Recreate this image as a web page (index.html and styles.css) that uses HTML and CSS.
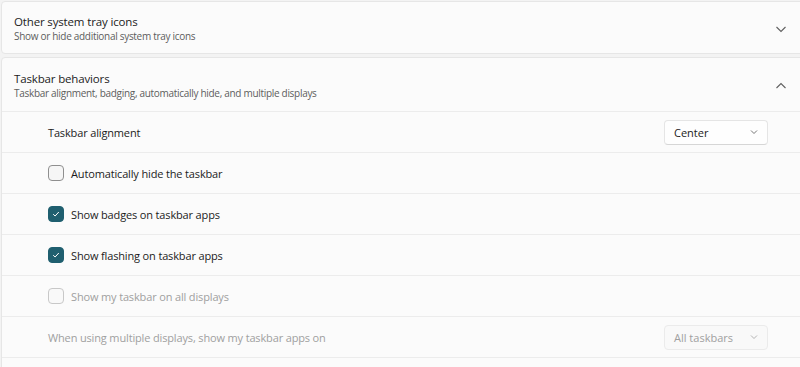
FILE: index.html
```html
<!DOCTYPE html>
<html lang="en">
<head>
  <meta charset="UTF-8" />
  <meta name="viewport" content="width=device-width, initial-scale=1.0"/>
  <title>Taskbar settings</title>
  <link rel="stylesheet" href="styles.css">
</head>
<body>

<div class="page">
  <!-- Tarjeta plegada -->
  <div class="card">
    <div class="card-head">
      <div>
        <div class="title">Other system tray icons</div>
        <div class="subtitle">Show or hide additional system tray icons</div>
      </div>
      <svg class="chevron" width="12" height="12" viewBox="0 0 12 12"><path d="M1.5 4 L6 8.5 L10.5 4" fill="none" stroke="#5f5f5f" stroke-width="1.1"/></svg>
    </div>
  </div>

  <!-- Tarjeta abierta -->
  <div class="card">
    <div class="card-head head-open">
      <div>
        <div class="title">Taskbar behaviors</div>
        <div class="subtitle">Taskbar alignment, badging, automatically hide, and multiple displays</div>
      </div>
      <svg class="chevron" width="12" height="12" viewBox="0 0 12 12"><path d="M1.5 8 L6 3.5 L10.5 8" fill="none" stroke="#5f5f5f" stroke-width="1.1"/></svg>
    </div>

    <div class="row">
      <span class="label">Taskbar alignment</span>
      <div class="dropdown">
        <span>Center</span>
        <svg width="8" height="8" viewBox="0 0 8 8"><path d="M1 2.5 L4 5.5 L7 2.5" fill="none" stroke="#666" stroke-width="0.9"/></svg>
      </div>
    </div>

    <div class="row">
      <label class="check"><span class="box"></span>Automatically hide the taskbar</label>
    </div>

    <div class="row">
      <label class="check"><span class="box on"><svg width="10" height="10" viewBox="0 0 10 10"><path d="M2.2 5.2 L4.1 7 L7.8 3" fill="none" stroke="#fff" stroke-width="1"/></svg></span>Show badges on taskbar apps</label>
    </div>

    <div class="row">
      <label class="check"><span class="box on"><svg width="10" height="10" viewBox="0 0 10 10"><path d="M2.2 5.2 L4.1 7 L7.8 3" fill="none" stroke="#fff" stroke-width="1"/></svg></span>Show flashing on taskbar apps</label>
    </div>

    <div class="row disabled">
      <label class="check"><span class="box"></span>Show my taskbar on all displays</label>
    </div>

    <div class="row disabled">
      <span class="label">When using multiple displays, show my taskbar apps on</span>
      <div class="dropdown">
        <span>All taskbars</span>
        <svg width="8" height="8" viewBox="0 0 8 8"><path d="M1 2.5 L4 5.5 L7 2.5" fill="none" stroke="#aaa" stroke-width="0.9"/></svg>
      </div>
    </div>

    <div class="row"></div>
  </div>
</div>

</body>
</html>
```

FILE: styles.css
```css
body {
  margin: 0;
  font-family: 'Segoe UI', 'Open Sans', sans-serif;
  background: #f3f3f3;
  color: #1b1b1b;
  overflow: hidden;
}

.page {
  width: 812px;
  margin: 1px 0 0 1px;
  display: flex;
  flex-direction: column;
  gap: 3px;
}

.card {
  background: #fbfbfb;
  border: 1px solid #e6e6e6;
  border-radius: 4px;
}

.card-head {
  height: 49px;
  padding: 2px 19px 0 12px;
  display: flex;
  align-items: center;
  justify-content: space-between;
}

.head-open {
  height: 51px;
}

.title {
  font-size: 11.5px;
  letter-spacing: -0.15px;
  line-height: 16px;
}

.subtitle {
  font-size: 10px;
  letter-spacing: -0.3px;
  line-height: 13px;
  color: #5d5d5d;
}

.chevron {
  margin-right: 6px;
}

.row {
  height: 40px;
  border-top: 1px solid #ececec;
  display: flex;
  align-items: center;
  justify-content: space-between;
  padding: 0 44px 0 46px;
  font-size: 11px;
  letter-spacing: -0.15px;
}

.check {
  display: flex;
  align-items: center;
  gap: 7px;
}

.box {
  width: 14px;
  height: 14px;
  border: 1px solid #8f8f8f;
  border-radius: 4px;
  background: #f6f6f6;
  display: flex;
  align-items: center;
  justify-content: center;
}

.box.on {
  background: #1f5f6f;
  border-color: #1f5f6f;
}

.dropdown {
  width: 84px;
  height: 23px;
  padding: 0 9px;
  border: 1px solid #e5e5e5;
  border-bottom-color: #d6d6d6;
  border-radius: 4px;
  background: #fefefe;
  display: flex;
  align-items: center;
  justify-content: space-between;
  letter-spacing: 0;
}

.disabled {
  color: #a0a0a0;
}

.disabled .box {
  border-color: #c8c8c8;
  background: #f9f9f9;
}

.disabled .dropdown {
  background: #f9f9f9;
  border-color: #ebebeb;
}
```
